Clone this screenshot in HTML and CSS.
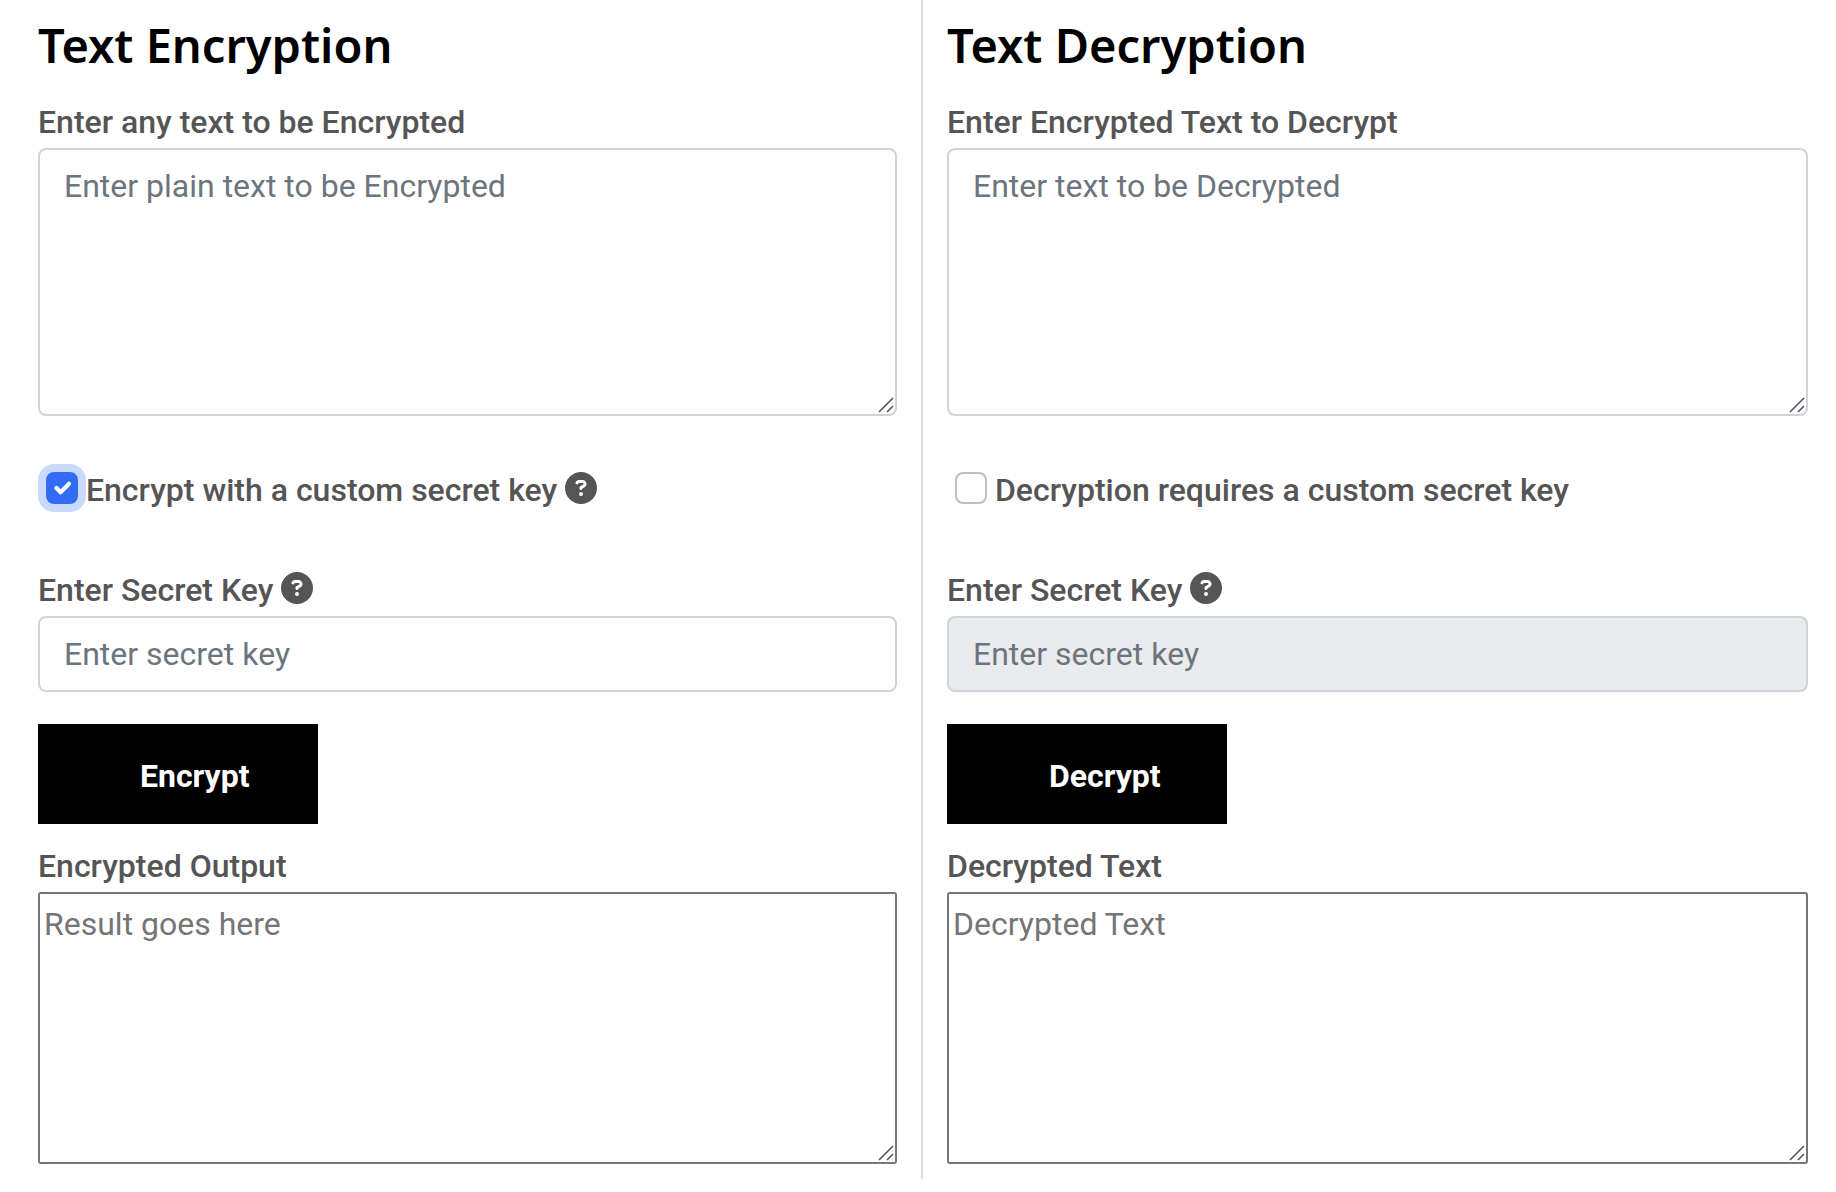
FILE: index.html
```html
<!DOCTYPE html>
<html lang="en">
<head>
<meta charset="utf-8">
<meta name="viewport" content="width=device-width, initial-scale=1">
<title>Text Encryption and Decryption</title>
<link rel="stylesheet" href="styles.css">
</head>
<body>
<svg class="sprite" aria-hidden="true">
  <symbol id="help" viewBox="0 0 512 512"><path d="M256 512A256 256 0 1 0 256 0a256 256 0 1 0 0 512zM169.8 165.3c7.9-22.3 29.1-37.3 52.8-37.3h58.3c34.9 0 63.1 28.3 63.1 63.1c0 22.6-12.1 43.5-31.7 54.8L280 264.4c-.2 13-10.9 23.6-24 23.6c-13.3 0-24-10.7-24-24V250.5c0-8.6 4.6-16.5 12.1-20.8l44.3-25.4c4.7-2.7 7.6-7.7 7.6-13.1c0-8.4-6.8-15.1-15.1-15.1H222.6c-3.4 0-6.4 2.1-7.5 5.3l-.4 1.2c-4.4 12.5-18.2 19-30.6 14.6s-19-18.2-14.6-30.6l.4-1.2zM224 352a32 32 0 1 1 64 0 32 32 0 1 1 -64 0z"/></symbol>
  <symbol id="grip" viewBox="0 0 16 16"><path d="M1 15L15 1M9 15L15 9" fill="none" stroke="#555" stroke-width="1.6"/></symbol>
</svg>
<main class="tools">
  <form class="panel">
    <h1 class="title">Text Encryption</h1>
    <label class="label" for="plain">Enter any text to be Encrypted</label>
    <div class="area">
      <textarea class="control control-area" id="plain" placeholder="Enter plain text to be Encrypted"></textarea>
      <svg class="grip" aria-hidden="true"><use href="#grip"/></svg>
    </div>
    <div class="option">
      <input class="check" type="checkbox" id="use-key" checked>
      <label for="use-key">Encrypt with a custom secret key</label>
      <svg class="help" role="img" aria-label="Help"><use href="#help"/></svg>
    </div>
    <label class="label" for="enc-key">Enter Secret Key <svg class="help" role="img" aria-label="Help"><use href="#help"/></svg></label>
    <input class="control" type="text" id="enc-key" placeholder="Enter secret key">
    <button class="submit" type="button">Encrypt</button>
    <label class="label" for="enc-out">Encrypted Output</label>
    <div class="area">
      <textarea class="output" id="enc-out" placeholder="Result goes here"></textarea>
      <svg class="grip" aria-hidden="true"><use href="#grip"/></svg>
    </div>
  </form>
  <form class="panel">
    <h1 class="title">Text Decryption</h1>
    <label class="label" for="cipher">Enter Encrypted Text to Decrypt</label>
    <div class="area">
      <textarea class="control control-area" id="cipher" placeholder="Enter text to be Decrypted"></textarea>
      <svg class="grip" aria-hidden="true"><use href="#grip"/></svg>
    </div>
    <div class="option">
      <input class="check" type="checkbox" id="needs-key">
      <label for="needs-key">Decryption requires a custom secret key</label>
    </div>
    <label class="label" for="dec-key">Enter Secret Key <svg class="help" role="img" aria-label="Help"><use href="#help"/></svg></label>
    <input class="control" type="text" id="dec-key" placeholder="Enter secret key" disabled>
    <button class="submit" type="button">Decrypt</button>
    <label class="label" for="dec-out">Decrypted Text</label>
    <div class="area">
      <textarea class="output" id="dec-out" placeholder="Decrypted Text"></textarea>
      <svg class="grip" aria-hidden="true"><use href="#grip"/></svg>
    </div>
  </form>
</main>
</body>
</html>
```
FILE: styles.css
```css
* {
  box-sizing: border-box;
}

body {
  margin: 0;
  background: #fff;
  color: #555;
  font: 500 32px/48px Roboto, sans-serif;
}

.sprite {
  display: none;
}

.tools {
  display: grid;
  grid-template-columns: 1fr 1fr;
  padding: 0 4px 0 14px;
}

.panel {
  padding: 15px 24px;
}

.panel:first-child {
  border-right: 2px solid #dcdcdc;
}

.title {
  margin: 0 0 23px;
  color: #000;
  font: 600 47px/60px "Noto Sans", sans-serif;
}

.label {
  display: block;
  margin-bottom: 2px;
}

.area {
  position: relative;
}

.control,
.output {
  display: block;
  width: 100%;
  margin: 0;
  border: 2px solid #ced4da;
  background: #fff;
  color: #495057;
  font: 400 32px/48px Roboto, sans-serif;
  resize: none;
}

.control {
  height: 76px;
  padding: 12px 24px;
  border-radius: 8px;
}

.control-area {
  height: 268px;
}

.control::placeholder {
  color: #6c757d;
  opacity: 1;
}

.control:disabled {
  background: #e9ebef;
}

.output {
  height: 272px;
  padding: 6px 4px;
  border-color: #767676;
  border-radius: 3px;
}

.output::placeholder {
  color: #757575;
}

.grip {
  position: absolute;
  right: 3px;
  bottom: 3px;
  width: 16px;
  height: 16px;
  pointer-events: none;
}

.option {
  margin: 50px 0 52px;
}

.check {
  appearance: none;
  width: 32px;
  height: 32px;
  margin: 0 0 0 8px;
  border: 2px solid #bfbfbf;
  border-radius: 8px;
  background: #fff;
  vertical-align: -3px;
}

.check:checked {
  border-color: #316cf4;
  background: #316cf4 url("data:image/svg+xml,%3Csvg xmlns='http://www.w3.org/2000/svg' viewBox='0 0 20 20'%3E%3Cpath fill='none' stroke='%23fff' stroke-linecap='round' stroke-linejoin='round' stroke-width='3' d='M6 10l3 3l6-6'/%3E%3C/svg%3E") center / contain no-repeat;
  box-shadow: 0 0 0 8px #cbdafc;
}

.help {
  width: 32px;
  height: 32px;
  fill: #555;
  vertical-align: -3px;
}

.submit {
  display: block;
  width: 280px;
  height: 100px;
  margin: 32px 0 18px;
  padding: 28px 0 24px 102px;
  border: 0;
  background: #000;
  color: #fff;
  font: 700 32px/48px Roboto, sans-serif;
  text-align: left;
}
```
